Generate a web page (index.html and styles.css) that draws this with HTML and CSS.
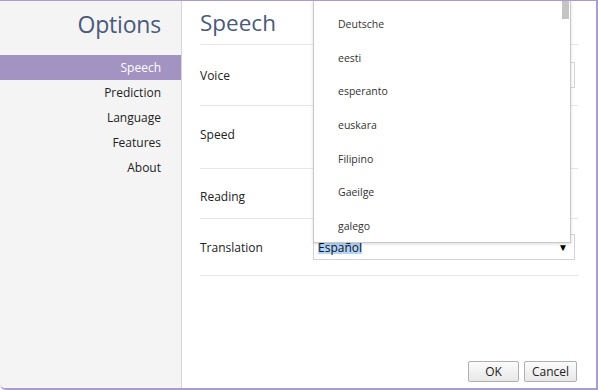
FILE: index.html
```html
<!DOCTYPE html>
<html lang="en">
<head>
  <meta charset="UTF-8" />
  <title>Options</title>
  <link rel="stylesheet" href="styles.css">
</head>
<body>
  <div class="frame">
    <div class="sidebar">
      <h1>Options</h1>
      <ul class="nav">
        <li class="active">Speech</li>
        <li>Prediction</li>
        <li>Language</li>
        <li>Features</li>
        <li>About</li>
      </ul>
    </div>

    <div class="main">
      <h2>Speech</h2>

      <div class="row row-voice">
        <span class="label">Voice</span>
        <div class="select"></div>
      </div>
      <div class="row row-speed">
        <span class="label">Speed</span>
        <div class="slider"></div>
      </div>
      <div class="row row-reading">
        <span class="label">Reading</span>
        <div class="select small"></div>
      </div>
      <div class="row row-translation">
        <span class="label">Translation</span>
        <div class="select open">
          <span class="picked">Español</span>
          <span class="arrow">▼</span>
        </div>
      </div>

      <div class="buttons">
        <button>OK</button>
        <button>Cancel</button>
      </div>

      <div class="dropdown">
        <div class="thumb"></div>
        <ul>
          <li>Deutsche</li>
          <li>eesti</li>
          <li>esperanto</li>
          <li>euskara</li>
          <li>Filipino</li>
          <li>Gaeilge</li>
          <li>galego</li>
        </ul>
      </div>
    </div>
  </div>
</body>
</html>
```

FILE: styles.css
```css
body {
  margin: 0;
  font-family: 'Open Sans', sans-serif;
  background: #fff;
}

.frame {
  box-sizing: border-box;
  width: 598px;
  height: 390px;
  display: flex;
  border-top: 1px solid #a99dcf;
  border-right: 2px solid #a99dcf;
  border-bottom: 2px solid #a99dcf;
  border-radius: 0 0 0 6px;
  overflow: hidden;
}

.sidebar {
  width: 181px;
  flex-shrink: 0;
  background: #f4f4f4;
  border-right: 1px solid #d6d6d6;
}

.sidebar h1 {
  margin: 0;
  padding: 5px 20px 0 0;
  height: 49px;
  box-sizing: border-box;
  text-align: right;
  font-size: 23px;
  font-weight: normal;
  line-height: 36px;
  letter-spacing: -0.2px;
  color: #4b5a7b;
}

.nav {
  list-style: none;
  margin: 5px 0 0;
  padding: 0;
}

.nav li {
  height: 25px;
  line-height: 26px;
  padding-right: 20px;
  text-align: right;
  font-size: 12px;
  color: #222;
}

.nav li.active {
  background: #a393c3;
  color: #fff;
}

.main {
  position: relative;
  flex: 1;
  padding: 0 18px 0 18px;
}

.main h2 {
  margin: 0;
  height: 43px;
  border-bottom: 1px solid #e6e6e6;
  font-size: 22.5px;
  font-weight: normal;
  line-height: 44px;
  color: #4b5a7b;
}

.row {
  display: flex;
  align-items: center;
  border-bottom: 1px solid #e6e6e6;
  box-sizing: border-box;
}

.row-voice { height: 61px; }
.row-speed { height: 63px; padding-bottom: 6px; }
.row-reading { height: 50px; padding-top: 6px; }
.row-translation { height: 57px; }

.label {
  width: 113px;
  flex-shrink: 0;
  font-size: 12px;
  color: #222;
}

.select {
  box-sizing: border-box;
  flex: 1;
  height: 26px;
  margin-right: 3px;
  border: 1px solid #d4d4d4;
  display: flex;
  align-items: center;
  justify-content: space-between;
  padding: 0 6px 0 4px;
  font-size: 12px;
}

.select.small {
  flex: none;
  width: 200px;
  height: 12px;
  border-color: #bbb;
}

.slider {
  width: 200px;
  height: 5px;
  margin-top: -18px;
  border-left: 2px solid #777;
}

.picked {
  background: #b3d4fb;
  color: #111;
  line-height: 13px;
}

.arrow {
  font-size: 10px;
  color: #000;
}

.buttons {
  position: absolute;
  right: 19px;
  bottom: 6px;
  display: flex;
  gap: 5px;
}

.buttons button {
  height: 21px;
  padding: 0;
  border: 1px solid #b0b0b0;
  border-radius: 2px;
  background: linear-gradient(#fbfbfb, #e8e8e8);
  font-family: 'Open Sans', sans-serif;
  font-size: 12px;
  color: #222;
}

.buttons button:first-child { width: 51px; }
.buttons button:last-child { width: 53px; }

.dropdown {
  position: absolute;
  left: 131px;
  top: -1px;
  width: 258px;
  height: 243px;
  box-sizing: border-box;
  background: #fff;
  border: 1px solid #c9c9c9;
  box-shadow: 0 1px 3px rgba(0, 0, 0, 0.15);
}

.dropdown .thumb {
  position: absolute;
  right: 1px;
  top: 0;
  width: 7px;
  height: 18px;
  background: #c4c4c4;
}

.dropdown ul {
  list-style: none;
  margin: 0;
  padding: 7px 0 0 24px;
}

.dropdown li {
  height: 33.7px;
  line-height: 33.7px;
  font-size: 10.5px;
  color: #333;
}
```
